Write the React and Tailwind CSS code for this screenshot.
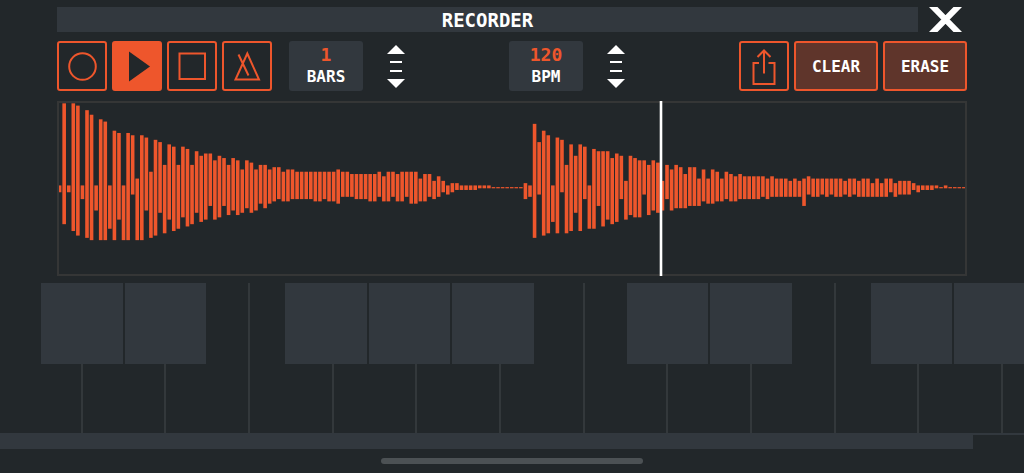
import React, { useState } from 'react';

// bar heights above and below the centre line, in steps
const peaksUp = [
  1, 37, 1, 37, 36, 1, 34, 32, 1, 30, 29, 1, 25, 24, 1, 24, 23, 4, 23, 22,
  7, 21, 20, 10, 19, 18, 10, 18, 17, 10, 16, 14, 15, 15, 12, 14, 13, 10, 13, 12,
  8, 12, 11, 8, 10, 10, 8, 9, 9, 7, 8, 8, 7, 7, 7, 7, 7, 7, 7, 7,
  7, 8, 7, 7, 6, 6, 6, 6, 6, 6, 7, 5, 7, 7, 6, 7, 7, 7, 7, 4,
  6, 6, 3, 5, 3, 1, 2, 2, 1, 1, 1, 1, 1, 1, 1, 0, 0, 0, 0, 0,
  0, 0, 2, 1, 28, 20, 25, 23, 1, 22, 21, 10, 19, 14, 19, 18, 1, 17, 16, 16,
  16, 13, 15, 14, 3, 14, 13, 12, 12, 10, 12, 11, 3, 10, 8, 10, 9, 6, 9, 9,
  4, 8, 4, 8, 7, 4, 7, 6, 5, 6, 5, 5, 5, 5, 5, 4, 5, 4, 4, 4,
  3, 4, 3, 4, 5, 4, 4, 4, 4, 4, 4, 4, 3, 4, 4, 3, 4, 4, 2, 4,
  2, 4, 4, 2, 3, 3, 3, 2, 1, 1, 1, 1, 1, 0, 1, 0, 0, 0, 0,
];

const peaksDown = [
  2, 16, 2, 19, 21, 5, 22, 23, 10, 23, 23, 18, 23, 14, 23, 23, 3, 23, 23, 10,
  22, 21, 11, 20, 14, 19, 18, 13, 17, 16, 11, 15, 14, 8, 14, 13, 8, 12, 10, 12,
  11, 9, 11, 10, 7, 9, 7, 6, 5, 6, 6, 5, 5, 5, 5, 5, 6, 6, 5, 6,
  6, 7, 4, 4, 4, 5, 5, 5, 6, 6, 4, 6, 6, 4, 6, 6, 4, 7, 7, 6,
  6, 4, 5, 4, 2, 3, 2, 1, 1, 1, 1, 1, 0, 0, 0, 0, 0, 0, 0, 0,
  0, 0, 5, 4, 22, 3, 21, 20, 15, 20, 2, 20, 19, 11, 19, 5, 18, 18, 8, 17,
  14, 16, 15, 5, 14, 12, 13, 13, 3, 12, 10, 11, 10, 5, 10, 9, 9, 9, 8, 8,
  8, 6, 7, 7, 6, 6, 5, 6, 6, 5, 5, 5, 5, 5, 4, 5, 4, 4, 4, 4,
  4, 4, 4, 8, 3, 4, 4, 3, 4, 3, 4, 4, 3, 4, 3, 4, 4, 4, 4, 4,
  4, 4, 2, 4, 3, 3, 3, 1, 2, 1, 1, 1, 0, 0, 0, 0, 0, 0, 0,
];

const whiteKeys = [
  { note: 'C', place: 'col-start-[1] col-end-[13]' },
  { note: 'D', place: 'col-start-[13] col-end-[25]' },
  { note: 'E', place: 'col-start-[25] col-end-[37]' },
  { note: 'F', place: 'col-start-[37] col-end-[49]' },
  { note: 'G', place: 'col-start-[49] col-end-[61]' },
  { note: 'A', place: 'col-start-[61] col-end-[73]' },
  { note: 'B', place: 'col-start-[73] col-end-[85]' },
  { note: 'C', place: 'col-start-[85] col-end-[97]' },
  { note: 'D', place: 'col-start-[97] col-end-[109]' },
  { note: 'E', place: 'col-start-[109] col-end-[121]' },
  { note: 'F', place: 'col-start-[121] col-end-[133]' },
  { note: 'G', place: 'col-start-[133] col-end-[145]' },
];

const blackKeys = [
  { note: 'C sharp', place: 'col-start-[7] col-end-[19]' },
  { note: 'D sharp', place: 'col-start-[19] col-end-[31]' },
  { note: 'F sharp', place: 'col-start-[42] col-end-[54]' },
  { note: 'G sharp', place: 'col-start-[54] col-end-[66]' },
  { note: 'A sharp', place: 'col-start-[66] col-end-[78]' },
  { note: 'C sharp', place: 'col-start-[91] col-end-[103]' },
  { note: 'D sharp', place: 'col-start-[103] col-end-[115]' },
  { note: 'F sharp', place: 'col-start-[126] col-end-[138]' },
];

const IconButton = ({ label, active, onClick, children }) => (
  <button
    type="button"
    aria-label={label}
    onClick={onClick}
    className={`size-[50px] shrink-0 rounded-[3px] border-2 border-[#ee562c] ${
      active ? 'bg-[#ee562c] text-[#22272a]' : 'text-[#ee562c]'
    }`}
  >
    <svg viewBox="0 0 46 46" className="size-full" fill="none" stroke="currentColor" strokeWidth="2">
      {children}
    </svg>
  </button>
);

const TextButton = ({ children, onClick }) => (
  <button
    type="button"
    onClick={onClick}
    className="h-[50px] w-[84px] shrink-0 rounded-[3px] border-2 border-[#ee562c] bg-[#5f352b] pt-0.5 text-[16px] font-bold"
  >
    {children}
  </button>
);

const Stepper = ({ label, value, onChange }) => (
  <div className="flex items-center gap-6">
    <div className="flex h-[50px] w-[74px] flex-col items-center rounded-[3px] bg-[#32383e] pt-[3px] font-bold leading-[22px]">
      <output className="text-[18px] text-[#ee562c]">{value}</output>
      <span className="text-[16px]">{label}</span>
    </div>
    <div className="flex flex-col items-center gap-[7px]">
      <button type="button" aria-label={`More ${label}`} onClick={() => onChange(value + 1)}>
        <svg viewBox="0 0 18 9" className="block h-[9px] w-[18px]" fill="white">
          <path d="M9 0L18 9H0z" />
        </svg>
      </button>
      <div className="h-0.5 w-3 bg-white" />
      <div className="h-0.5 w-3 bg-white" />
      <button type="button" aria-label={`Fewer ${label}`} onClick={() => onChange(Math.max(1, value - 1))}>
        <svg viewBox="0 0 18 9" className="block h-[9px] w-[18px]" fill="white">
          <path d="M0 0H18L9 9z" />
        </svg>
      </button>
    </div>
  </div>
);

const Waveform = () => (
  <svg
    viewBox="0 0 906 171"
    preserveAspectRatio="none"
    className="block size-full overflow-visible"
    fill="#ee562c"
  >
    {peaksUp.map((up, i) => {
      const left = Math.max(i * 4.567 - 1.2, 0);
      const right = Math.min(i * 4.567 + 2.4, 906);
      const top = Math.max(84.7 - Math.max(up * 2.28, 0.6), 0);
      const bottom = 84.7 + Math.max(peaksDown[i] * 2.28, 0.6);
      return <rect key={i} x={left} y={top} width={right - left} height={bottom - top} />;
    })}
    <rect x="600.7" y="-2" width="2.6" height="175" fill="white" />
  </svg>
);

const Keyboard = () => (
  <div className="-ml-px grid grid-cols-[repeat(147,minmax(0,1fr))] grid-rows-[81px_69px]">
    {whiteKeys.map((key, i) => (
      <button
        key={i}
        type="button"
        aria-label={key.note}
        className={`row-start-1 row-end-3 border-r-2 border-[#33383b] ${key.place}`}
      />
    ))}
    {blackKeys.map((key, i) => (
      <button
        key={i}
        type="button"
        aria-label={key.note}
        className={`z-10 row-start-1 mr-0.5 border-0 bg-[#32383e] ${key.place}`}
      />
    ))}
    {/* runs past the right edge, so no gap after it */}
    <button
      type="button"
      aria-label="G sharp"
      className="z-10 col-start-[138] col-end-[148] row-start-1 bg-[#32383e]"
    />
  </div>
);

const App = () => {
  const [playing, setPlaying] = useState(true);
  const [bars, setBars] = useState(1);
  const [bpm, setBpm] = useState(120);

  return (
    <div className="min-h-screen overflow-hidden bg-[#22272a] pt-[7px] font-['DejaVu_Sans_Mono',monospace] text-white">
      <div className="px-[57px]">
        <header className="flex items-center gap-[11px] pr-[5px]">
          <h1 className="h-[25px] flex-1 bg-[#32383e] text-center text-[19px] font-bold leading-[27px]">
            RECORDER
          </h1>
          <button type="button" aria-label="Close">
            <svg viewBox="0 0 33 25" className="block h-[25px] w-[33px]" fill="white">
              <path d="M0 0H8.5L33 25H24.5zM24.5 0H33L8.5 25H0z" />
            </svg>
          </button>
        </header>

        <div className="mt-[9px] flex items-center">
          <div className="flex gap-[5px]">
            <IconButton label="Record">
              <circle cx="23.5" cy="23.5" r="13.3" />
            </IconButton>
            <IconButton label="Play" active={playing} onClick={() => setPlaying(true)}>
              <path d="M15 8.5L36 23.5L15 38.5z" fill="currentColor" stroke="none" />
            </IconButton>
            <IconButton label="Stop" onClick={() => setPlaying(false)}>
              <rect x="10.5" y="10.5" width="25.5" height="25.5" />
            </IconButton>
            <IconButton label="Metronome">
              <path d="M23.3 10.5L35 36.5H11.5zM14.5 11.5L24.5 32.5" />
            </IconButton>
          </div>
          <div className="ml-[17px] flex gap-[104px]">
            <Stepper label="BARS" value={bars} onChange={setBars} />
            <Stepper label="BPM" value={bpm} onChange={setBpm} />
          </div>
          <div className="ml-auto flex gap-[5px]">
            <IconButton label="Share">
              <path d="M18 20H12.5V41H33.5V20H27.5M23 30.5V8M16.5 14L23 7.5L29.5 14" />
            </IconButton>
            <TextButton>CLEAR</TextButton>
            <TextButton>ERASE</TextButton>
          </div>
        </div>

        <div className="mt-2.5 h-[175px] border-2 border-[#353636]">
          <Waveform />
        </div>
      </div>

      <div className="mt-[7px]">
        <Keyboard />
        <div className="border-t-2 border-[#32383e]">
          <div className="h-3.5 w-[95%] bg-[#32383e]" />
        </div>
      </div>
      <div className="mx-auto mt-[9px] h-1.5 w-[262px] rounded-full bg-[#4c5154]" />
    </div>
  );
};

export default App;
